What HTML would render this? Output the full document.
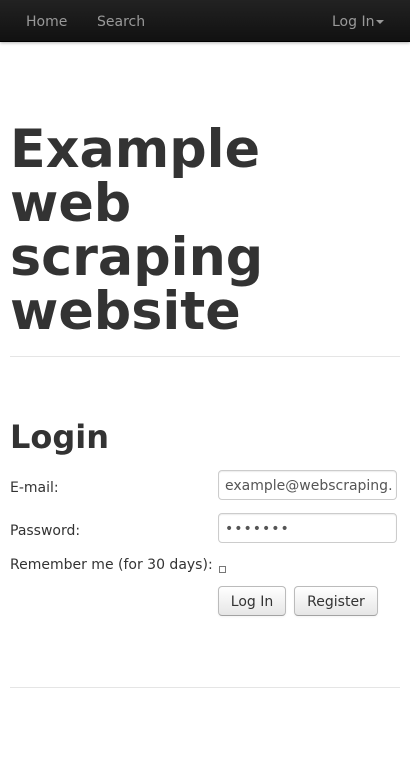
<!DOCTYPE html>
<html><head><meta charset="utf-8"><style>
*{box-sizing:border-box}
body{margin:0;width:410px;height:771px;background:#fff;font-family:"DejaVu Sans",sans-serif;color:#333;font-size:14px;overflow:hidden;position:relative}
.nav{position:absolute;left:0;top:0;width:410px;height:42px;background:linear-gradient(#222,#111);border-bottom:1px solid #000;box-shadow:0 1px 3px rgba(0,0,0,.3)}
.nav span{position:absolute;top:14px;color:#999;font-size:14px}
.caret{display:inline-block;width:0;height:0;border-left:4px solid transparent;border-right:4px solid transparent;border-top:4px solid #999;vertical-align:middle;margin-left:2px}
h1{position:absolute;left:10px;top:123px;margin:0;font-size:52.3px;line-height:54px;font-weight:bold;color:#333;width:300px}
hr{position:absolute;left:10px;width:390px;margin:0;border:0;border-top:1px solid #e5e5e5}
h2{position:absolute;left:10px;top:417px;margin:0;font-size:32px;line-height:40px;font-weight:bold}
.lbl{position:absolute;left:10px;font-size:14px}
.inp{position:absolute;left:218px;width:179px;height:30px;border:1px solid #ccc;border-radius:4px;padding:7px 6px 5px;font-size:14px;color:#555;overflow:hidden;white-space:nowrap;box-shadow:inset 0 1px 1px rgba(0,0,0,.075)}
.btn{position:absolute;top:586px;height:30px;border:1px solid #bbb;border-bottom-color:#a2a2a2;border-radius:4px;background:linear-gradient(#fff,#e6e6e6);font-size:14px;color:#333;text-align:center;line-height:30px;box-shadow:0 1px 2px rgba(0,0,0,.05)}
</style></head><body>
<div class="nav"><span style="left:26px">Home</span><span style="left:97px">Search</span><span style="left:332px">Log In<i class="caret"></i></span></div>
<h1>Example web scraping website</h1>
<hr style="top:356px">
<h2>Login</h2>
<div class="lbl" style="top:480px">E-mail:</div>
<div class="inp" style="top:470px">example@webscraping.</div>
<div class="lbl" style="top:523px">Password:</div>
<div class="inp" style="top:513px;letter-spacing:1px">•••••••</div>
<div class="lbl" style="top:557px">Remember me (for 30 days):</div>
<div style="position:absolute;left:219px;top:566px;width:7px;height:7px;border:1px solid #777"></div>
<div class="btn" style="left:218px;width:68px">Log In</div>
<div class="btn" style="left:294px;width:84px">Register</div>
<hr style="top:687px">
</body></html>
